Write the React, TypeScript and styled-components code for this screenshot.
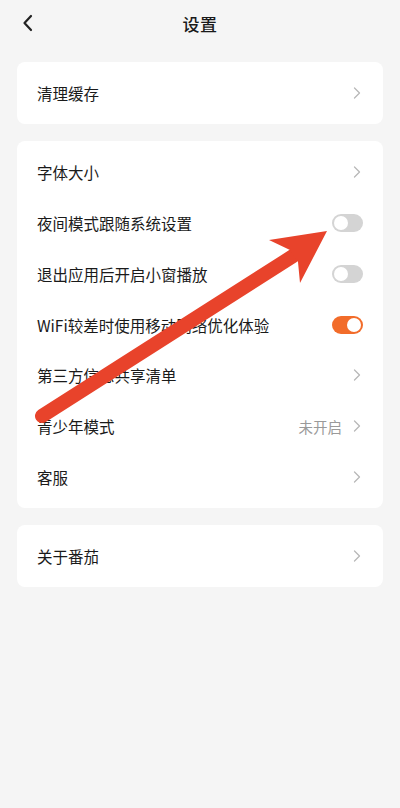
import React from "react";
import styled, { createGlobalStyle } from "styled-components";

const Global = createGlobalStyle`
  html, body { margin: 0; padding: 0; background: #f5f5f5; }
  body { font-family: "Noto Sans CJK SC", "Noto Sans", sans-serif; }
`;

const Page = styled.div`
  position: relative;
  width: 400px;
  height: 808px;
  background: #f5f5f5;
  overflow: hidden;
`;

const Header = styled.div`
  height: 46px;
  display: flex;
  align-items: center;
  justify-content: center;
  position: relative;
`;

const Back = styled.div`
  position: absolute;
  left: 18px;
  top: 13px;
  width: 20px;
  height: 20px;
  display: flex;
  align-items: center;
  justify-content: center;
`;

const Title = styled.div`
  font-size: 17px;
  color: #1a1a1a;
  font-weight: 500;
  letter-spacing: 0.5px;
`;

const Content = styled.div`
  display: flex;
  flex-direction: column;
  gap: 17.5px;
  padding: 16px 17px 0;
`;

const Card = styled.div`
  background: #fff;
  border-radius: 8px;
  padding: 5.5px 0;
`;

const Row = styled.div`
  height: 50.8px;
  display: flex;
  align-items: center;
  padding: 0 20px 0 20px;
`;

const Label = styled.div`
  flex: 1;
  font-size: 15.5px;
  color: #1a1a1a;
`;

const Value = styled.span`
  font-size: 14.5px;
  color: #9a9a9a;
  margin-right: 11px;
`;

const Switch = styled.div<{ $on?: boolean }>`
  width: 31px;
  height: 18px;
  border-radius: 9px;
  background: ${(p) => (p.$on ? "#f26c2a" : "#d4d4d4")};
  position: relative;
  &::after {
    content: "";
    position: absolute;
    top: 2px;
    left: ${(p) => (p.$on ? "15px" : "2px")};
    width: 14px;
    height: 14px;
    border-radius: 50%;
    background: #fff;
  }
`;

const Arrow = styled.svg`
  position: absolute;
  left: 0;
  top: 0;
  pointer-events: none;
`;

const Chevron = () => (
  <svg width="8" height="12" viewBox="0 0 8 12" style={{ marginRight: 2 }}>
    <path d="M1.5 1 L6.5 6 L1.5 11" fill="none" stroke="#b8b8b8" strokeWidth="1.3" strokeLinecap="round" strokeLinejoin="round" />
  </svg>
);

type Item = { label: string; kind: "chev" | "off" | "on"; value?: string };

const group2: Item[] = [
  { label: "字体大小", kind: "chev" },
  { label: "夜间模式跟随系统设置", kind: "off" },
  { label: "退出应用后开启小窗播放", kind: "off" },
  { label: "WiFi较差时使用移动网络优化体验", kind: "on" },
  { label: "第三方信息共享清单", kind: "chev" },
  { label: "青少年模式", kind: "chev", value: "未开启" },
  { label: "客服", kind: "chev" },
];

const SettingRow = ({ item }: { item: Item }) => (
  <Row>
    <Label>{item.label}</Label>
    {item.value && <Value>{item.value}</Value>}
    {item.kind === "chev" ? <Chevron /> : <Switch $on={item.kind === "on"} />}
  </Row>
);

export default function App() {
  return (
    <Page>
      <Global />
      <Header>
        <Back>
          <svg width="14" height="18" viewBox="0 0 14 18">
            <path d="M10 2 L3.5 9 L10 16" fill="none" stroke="#222" strokeWidth="2.2" strokeLinecap="round" strokeLinejoin="round" />
          </svg>
        </Back>
        <Title>设置</Title>
      </Header>
      <Content>
        <Card>
          <SettingRow item={{ label: "清理缓存", kind: "chev" }} />
        </Card>
        <Card>
          {group2.map((it) => (
            <SettingRow key={it.label} item={it} />
          ))}
        </Card>
        <Card>
          <SettingRow item={{ label: "关于番茄", kind: "chev" }} />
        </Card>
      </Content>
      <Arrow width="400" height="808" viewBox="0 0 400 808">
        <line x1="42" y1="416" x2="293" y2="256" stroke="#e8432b" strokeWidth="14" strokeLinecap="round" />
        <polygon points="327,231 269,240 290,250 298,262 300,283" fill="#e8432b" />
      </Arrow>
    </Page>
  );
}
